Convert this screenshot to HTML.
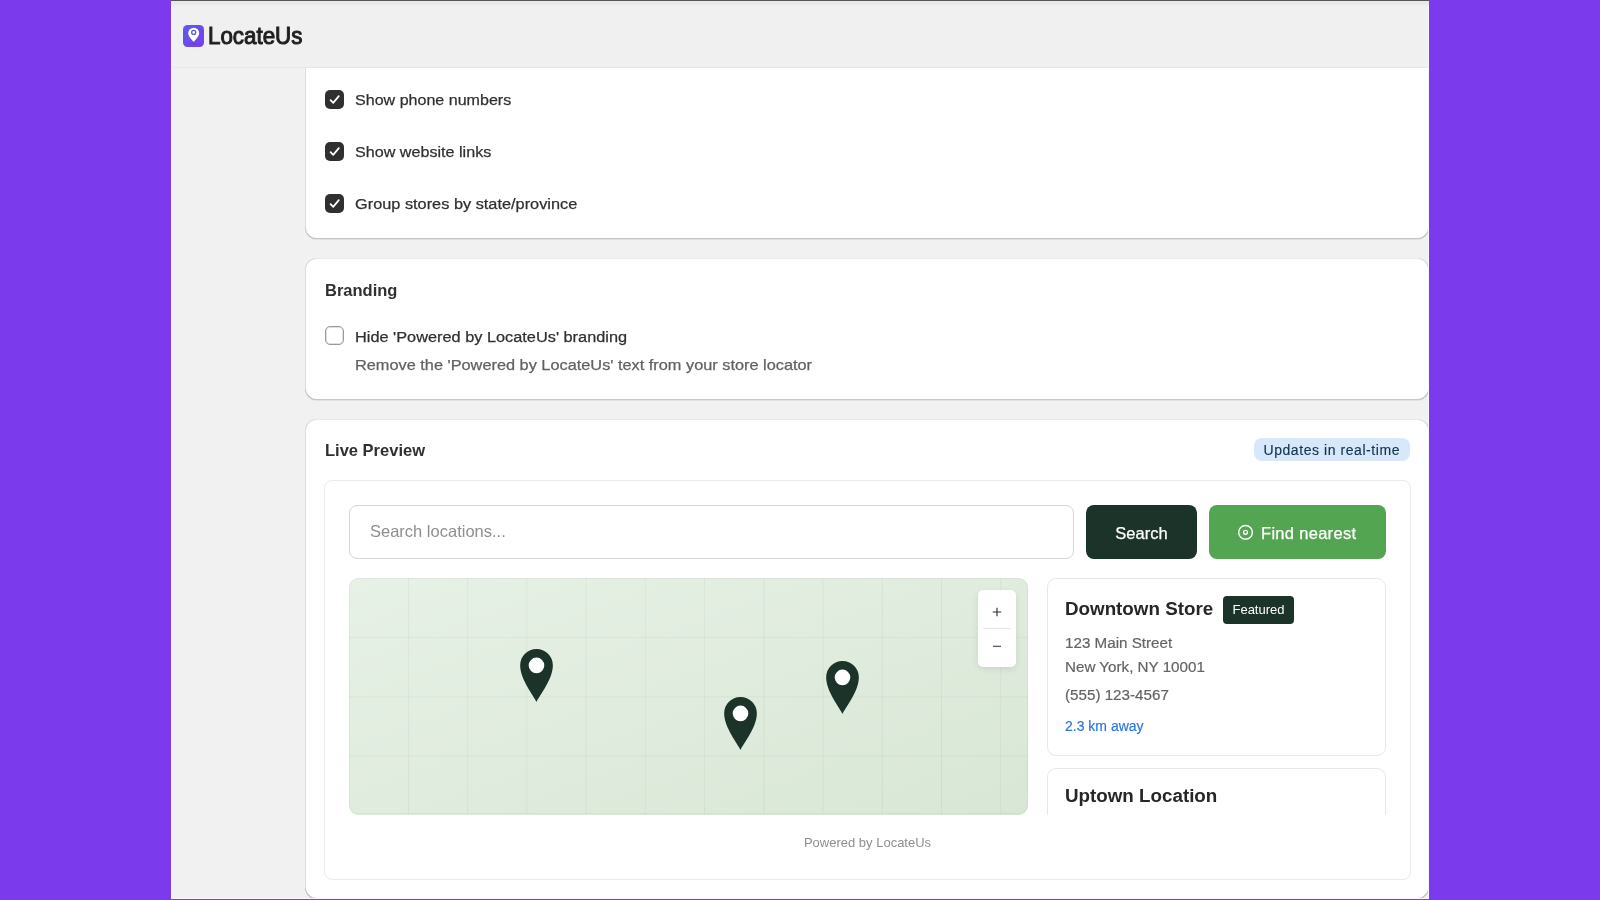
<!DOCTYPE html>
<html><head><meta charset="utf-8">
<style>
*{box-sizing:border-box;margin:0;padding:0}
html,body{width:1600px;height:900px;overflow:hidden;background:#7c3aed;font-family:"Liberation Sans",sans-serif;color:#303030}
#win{position:absolute;left:171px;top:0;width:1258px;height:899px;background:#f1f1f1;overflow:hidden;will-change:transform}
#lline{position:absolute;left:0;top:0;width:1px;height:899px;background:#f8f9f6;z-index:9}
#rline{position:absolute;left:1257px;top:0;width:1px;height:899px;background:#f8f9f6;z-index:9}
#bline{position:absolute;left:0;top:898px;width:1258px;height:1px;background:#f8f9f6;z-index:9}
#topline{position:absolute;left:0;top:0;width:1258px;height:1px;background:#565656;z-index:10}
#topshade{position:absolute;left:0;top:1px;width:1258px;height:5px;background:linear-gradient(#ececec,#e5e5e5 35%,#f0f0f0);z-index:10}
#header{position:absolute;left:0;top:0;width:1258px;height:68px;background:#f0f0f0;border-bottom:1px solid #e8e8e8;z-index:5}
.logo{position:absolute;left:11.8px;top:25px;width:21.5px;height:22px;overflow:hidden;border-radius:4.5px;background:linear-gradient(135deg,#5c5ce8 0%,#7a3ded 100%)}
.logo svg{position:absolute;left:0;top:0}
.brand{position:absolute;left:37px;top:23px;font-size:23px;font-weight:normal;color:#1f1f1f;letter-spacing:0;line-height:26px;-webkit-text-stroke:1px #1f1f1f;transform-origin:0 0;transform:scaleX(0.972)}
.card{position:absolute;left:134px;width:1124px;background:#fff;border-radius:12px;box-shadow:inset 1px 0 0 rgba(0,0,0,.13),inset -1px 0 0 rgba(0,0,0,.13),inset 0 -1px 0 rgba(0,0,0,.22),inset 0 1px 0 rgba(0,0,0,.08),0 1px 0 rgba(26,26,26,.07)}
.cb{position:absolute;width:19px;height:19px;border-radius:5px;background:#303030}
.cb svg{position:absolute;left:0;top:0}
.cbe{position:absolute;width:19px;height:19px;border-radius:5px;background:#fff;border:1px solid #9a9a9a;box-shadow:inset 0 0 0 1px rgba(0,0,0,.12)}
.lbl{position:absolute;font-size:15.5px;color:#303030;-webkit-text-stroke:0.25px #303030;white-space:nowrap;line-height:18px;transform-origin:0 0}
.ttl{position:absolute;font-size:16.5px;font-weight:bold;color:#303030;white-space:nowrap;line-height:19px}
.help{position:absolute;font-size:15px;color:#616161;-webkit-text-stroke:0.25px #616161;white-space:nowrap;line-height:18px;transform-origin:0 0;transform:scaleX(1.088)}
.badge{position:absolute;left:949px;top:19px;width:156px;height:23px;border-radius:8px;background:#d7e8fb;color:#0e3453;font-size:14px;font-weight:normal;line-height:24px;text-align:left;padding-left:9.5px;letter-spacing:0.56px;-webkit-text-stroke:0.15px #0e3453;white-space:nowrap}
.inner{position:absolute;left:19px;top:61px;width:1087px;height:400px;border:1px solid #ebebeb;border-radius:8px;background:#fff}
.search{position:absolute;left:24px;top:24px;width:725px;height:54px;border:1px solid #d6d6d6;border-radius:8px;font-size:16.5px;color:#8e8e8e;line-height:50px;padding-left:20px}
.btn1{position:absolute;left:761px;top:24px;width:111px;height:54px;border-radius:8px;background:#1b3329;color:#fff;font-size:16.5px;font-weight:normal;text-align:center;line-height:56px;-webkit-text-stroke:0.25px #fff}
.btn2{position:absolute;left:884px;top:24px;width:177px;height:54px;border-radius:8px;background:#53a551;color:#fff;font-size:16.5px;font-weight:normal;line-height:56px;-webkit-text-stroke:0.25px #fff}
.btn2 span{position:absolute;left:52px;top:0;letter-spacing:0.3px}
.btn2 svg{position:absolute;left:28px;top:19px}
.map{position:absolute;left:24px;top:97px;width:679px;height:237px;border-radius:9px;overflow:hidden;background:linear-gradient(160deg,#e7f1e6 0%,#e0ecde 50%,#d8e7d5 100%)}
.map svg.grid{position:absolute;left:0;top:0}
.zoom{position:absolute;left:629px;top:12px;width:38px;height:77px;background:#fff;border-radius:5px;box-shadow:0 2px 6px rgba(0,0,0,.10)}
.pin{position:absolute;width:33px;height:53px}
.list{position:absolute;left:722px;top:97px;width:339px;height:237px;overflow:hidden}
.store{position:absolute;left:0;width:339px;border:1px solid #e8e8e8;border-radius:9px;background:#fff}
.sname{position:absolute;left:17px;font-size:18.8px;font-weight:bold;color:#262626;white-space:nowrap;line-height:22px}
.feat{position:absolute;left:175px;top:17px;width:71px;height:28px;border-radius:4px;background:#1b3329;color:#fff;font-size:13px;line-height:28px;text-align:center}
.addr{position:absolute;left:17px;font-size:15.2px;color:#646464;-webkit-text-stroke:0.2px #646464;white-space:nowrap;line-height:18px}
.dist{position:absolute;left:17px;font-size:14px;color:#2a78e4;-webkit-text-stroke:0.2px #2a78e4;white-space:nowrap;line-height:17px}
.pow{position:absolute;left:0;top:354px;width:1085px;text-align:center;font-size:13px;color:#8f8f8f;line-height:15px}
</style></head>
<body>
<div id="win">
  <div id="lline"></div><div id="rline"></div><div id="bline"></div>
  <div id="topline"></div>
  <div id="topshade"></div>
  <div id="header">
    <div class="logo"><svg width="22" height="22" viewBox="0 0 22 22"><ellipse cx="10.7" cy="18.5" rx="2.4" ry="0.55" fill="#4a2ab0" opacity=".5"/><path d="M10.7 16.9C9.7 15.5 5.2 11.2 5.2 8.15A5.5 5.5 0 0 1 16.2 8.15C16.2 11.2 11.7 15.5 10.7 16.9Z" fill="#fff"/><circle cx="10.7" cy="7.45" r="2" fill="none" stroke="#5d55e6" stroke-width="1.3"/></svg></div>
    <div class="brand">LocateUs</div>
  </div>

  <!-- card 1 -->
  <div class="card" style="top:20px;height:219px">
    <div class="cb" style="left:20px;top:70px"><svg width="19" height="19" viewBox="0 0 19 19"><path d="M5.6 10.2l2.6 2.6 5.6-6.6" fill="none" stroke="#fff" stroke-width="1.8" stroke-linecap="round" stroke-linejoin="round"/></svg></div>
    <div class="lbl" style="left:50px;top:71px;transform:scaleX(1.036)">Show phone numbers</div>
    <div class="cb" style="left:20px;top:122px"><svg width="19" height="19" viewBox="0 0 19 19"><path d="M5.6 10.2l2.6 2.6 5.6-6.6" fill="none" stroke="#fff" stroke-width="1.8" stroke-linecap="round" stroke-linejoin="round"/></svg></div>
    <div class="lbl" style="left:50px;top:123px;transform:scaleX(1.041)">Show website links</div>
    <div class="cb" style="left:20px;top:174px"><svg width="19" height="19" viewBox="0 0 19 19"><path d="M5.6 10.2l2.6 2.6 5.6-6.6" fill="none" stroke="#fff" stroke-width="1.8" stroke-linecap="round" stroke-linejoin="round"/></svg></div>
    <div class="lbl" style="left:50px;top:175px;transform:scaleX(1.053)">Group stores by state/province</div>
  </div>

  <!-- card 2 -->
  <div class="card" style="top:258px;height:142px">
    <div class="ttl" style="left:20px;top:23px">Branding</div>
    <div class="cbe" style="left:20px;top:68px"></div>
    <div class="lbl" style="left:50px;top:70px;transform:scaleX(1.053)">Hide 'Powered by LocateUs' branding</div>
    <div class="help" style="left:50px;top:98px">Remove the 'Powered by LocateUs' text from your store locator</div>
  </div>

  <!-- card 3 -->
  <div class="card" style="top:419px;height:480px">
    <div class="ttl" style="left:20px;top:22px">Live Preview</div>
    <div class="badge">Updates in real-time</div>
    <div class="inner">
      <div class="search">Search locations...</div>
      <div class="btn1">Search</div>
      <div class="btn2"><svg width="16" height="16" viewBox="0 0 16 16"><circle cx="8.5" cy="8.3" r="6.85" fill="none" stroke="#fff" stroke-width="1.4"/><circle cx="8.5" cy="8.3" r="1.95" fill="none" stroke="#fff" stroke-width="1.3"/></svg><span>Find nearest</span></div>
      <div class="map">
        <svg class="grid" width="679" height="236"><g stroke="rgba(0,0,0,0.04)" stroke-width="1">
          <path d="M59.5 0V236M118.7 0V236M177.9 0V236M237.2 0V236M296.4 0V236M355.6 0V236M414.8 0V236M474.1 0V236M533.3 0V236M592.5 0V236M651.7 0V236"/>
          <path d="M0 59.7H679M0 118.9H679M0 178.2H679"/>
        </g><rect x="0.5" y="0.5" width="678" height="235" rx="9" fill="none" stroke="rgba(0,0,0,0.04)"/></svg>
        <svg class="pin" style="left:171px;top:71px" viewBox="0 0 32.7 53"><path d="M16.35 53C13.8 47.5 0 30.5 0 16.35A16.35 16.35 0 0 1 32.7 16.35C32.7 30.5 18.9 47.5 16.35 53Z" fill="#1b3329"/><circle cx="16.35" cy="16.4" r="7.8" fill="#fff"/></svg>
        <svg class="pin" style="left:374.5px;top:118.5px" viewBox="0 0 32.7 53"><path d="M16.35 53C13.8 47.5 0 30.5 0 16.35A16.35 16.35 0 0 1 32.7 16.35C32.7 30.5 18.9 47.5 16.35 53Z" fill="#1b3329"/><circle cx="16.35" cy="16.4" r="7.8" fill="#fff"/></svg>
        <svg class="pin" style="left:476.5px;top:83.3px" viewBox="0 0 32.7 53"><path d="M16.35 53C13.8 47.5 0 30.5 0 16.35A16.35 16.35 0 0 1 32.7 16.35C32.7 30.5 18.9 47.5 16.35 53Z" fill="#1b3329"/><circle cx="16.35" cy="16.4" r="7.8" fill="#fff"/></svg>
        <div class="zoom"><svg width="38" height="77" viewBox="0 0 38 77"><path d="M19 17.7v8.6M14.7 22h8.6" stroke="#303030" stroke-width="1.15"/><path d="M5 38.5h28" stroke="#e6e6e6" stroke-width="1"/><path d="M15 56.2h8" stroke="#303030" stroke-width="1.15"/></svg></div>
      </div>
      <div class="list">
        <div class="store" style="top:0;height:178px">
          <div class="sname" style="top:19px">Downtown Store</div>
          <div class="feat">Featured</div>
          <div class="addr" style="top:55px">123 Main Street</div>
          <div class="addr" style="top:79px">New York, NY 10001</div>
          <div class="addr" style="top:107px">(555) 123-4567</div>
          <div class="dist" style="top:139px">2.3 km away</div>
        </div>
        <div class="store" style="top:190px;height:177px">
          <div class="sname" style="top:16px">Uptown Location</div>
        </div>
      </div>
      <div class="pow">Powered by LocateUs</div>
    </div>
  </div>
</div>
</body></html>
